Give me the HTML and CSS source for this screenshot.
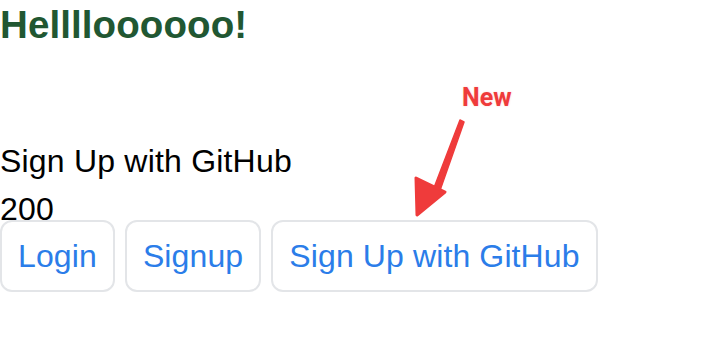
FILE: index.html
```html
<!DOCTYPE html>
<html>
<head>
<meta charset="utf-8">
<link rel="stylesheet" href="styles.css">
</head>
<body>
<div class="page">
  <h1 class="title">Helllloooooo!</h1>
  <div class="info">
    <div class="line">Sign Up with GitHub</div>
    <div class="line">200</div>
  </div>
  <div class="actions">
    <button class="btn">Login</button>
    <button class="btn">Signup</button>
    <button class="btn">Sign Up with GitHub</button>
  </div>
  <div class="annotation">
    <span class="new-label">New</span>
    <svg class="arrow" width="80" height="110" viewBox="0 0 80 110">
      <path d="M49 4 L53 6 L27 80 L21 77 Z" fill="#ef3b3b" stroke="#ef3b3b" stroke-width="1.5" stroke-linejoin="round"/>
      <path d="M5 62 L6 99 L34 76 Z" fill="#ef3b3b" stroke="#ef3b3b" stroke-width="3" stroke-linejoin="round"/>
    </svg>
  </div>
</div>
</body>
</html>
```
FILE: styles.css
```css
html, body {
  margin: 0;
  padding: 0;
  background: #ffffff;
}
.page {
  position: relative;
  width: 724px;
  height: 364px;
  font-family: "Liberation Sans", Arial, sans-serif;
}
.title {
  margin: 0;
  padding-top: 3px;
  font-size: 38.5px;
  font-weight: bold;
  line-height: 44px;
  letter-spacing: 0.1px;
  color: #215732;
}
.info {
  margin-top: 90px;
  font-size: 32px;
  line-height: 48px;
  letter-spacing: 0.2px;
  color: #000;
}
.actions {
  display: flex;
  gap: 10px;
  margin-top: -13px;
}
.btn {
  font-family: "Liberation Sans", Arial, sans-serif;
  font-size: 32px;
  line-height: 36px;
  letter-spacing: 0.12px;
  padding: 16px 16px;
  color: #2b7de9;
  background: #fff;
  border: 2px solid #e3e5e8;
  border-radius: 12px;
}
.annotation {
  position: absolute;
  left: 408px;
  top: 84px;
  width: 110px;
  height: 135px;
}
.new-label {
  position: absolute;
  left: 54px;
  top: -1px;
  font-family: Roboto, "Liberation Sans", sans-serif;
  font-weight: bold;
  font-size: 25px;
  color: #ef3b3b;
  text-shadow: 0 0 2px rgba(239,59,59,0.25);
}
.arrow {
  position: absolute;
  left: 3px;
  top: 32px;
}
```
